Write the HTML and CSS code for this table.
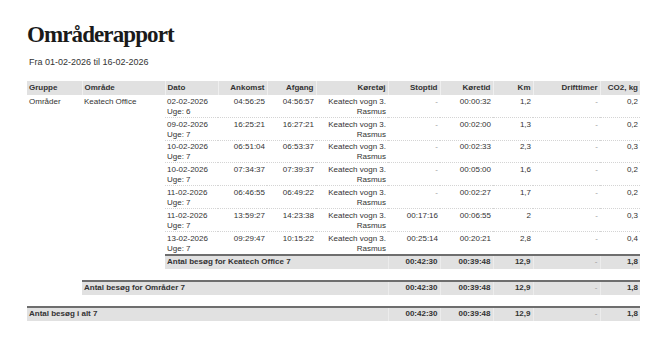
FILE: index.html
```html
<!DOCTYPE html>
<html lang="da">
<head>
<meta charset="utf-8">
<title>Områderapport</title>
<link rel="stylesheet" href="styles.css">
</head>
<body>
<main class="report">
  <h1 class="title">Områderapport</h1>
  <p class="period">Fra 01-02-2026 til 16-02-2026</p>
  <table class="grid">
    <colgroup>
      <col class="c-gruppe"><col class="c-omr"><col class="c-dato"><col class="c-ank"><col class="c-afg"><col class="c-koer"><col class="c-stop"><col class="c-ktid"><col class="c-km"><col class="c-drift"><col class="c-co2">
    </colgroup>
    <thead>
      <tr class="head">
        <th class="l">Gruppe</th><th class="l">Område</th><th class="l">Dato</th><th>Ankomst</th><th>Afgang</th><th>Køretøj</th><th>Stoptid</th><th>Køretid</th><th>Km</th><th>Drifttimer</th><th>CO2, kg</th>
      </tr>
    </thead>
    <tbody>
      <tr class="row">
        <td class="l plain">Områder</td><td class="l plain">Keatech Office</td>
        <td class="l">02-02-2026<br>Uge: 6</td><td>04:56:25</td><td>04:56:57</td><td>Keatech vogn 3. Rasmus</td><td class="dash">-</td><td>00:00:32</td><td>1,2</td><td class="dash">-</td><td>0,2</td>
      </tr>
      <tr class="row">
        <td class="plain"></td><td class="plain"></td>
        <td class="l">09-02-2026<br>Uge: 7</td><td>16:25:21</td><td>16:27:21</td><td>Keatech vogn 3. Rasmus</td><td class="dash">-</td><td>00:02:00</td><td>1,3</td><td class="dash">-</td><td>0,2</td>
      </tr>
      <tr class="row">
        <td class="plain"></td><td class="plain"></td>
        <td class="l">10-02-2026<br>Uge: 7</td><td>06:51:04</td><td>06:53:37</td><td>Keatech vogn 3. Rasmus</td><td class="dash">-</td><td>00:02:33</td><td>2,3</td><td class="dash">-</td><td>0,3</td>
      </tr>
      <tr class="row">
        <td class="plain"></td><td class="plain"></td>
        <td class="l">10-02-2026<br>Uge: 7</td><td>07:34:37</td><td>07:39:37</td><td>Keatech vogn 3. Rasmus</td><td class="dash">-</td><td>00:05:00</td><td>1,6</td><td class="dash">-</td><td>0,2</td>
      </tr>
      <tr class="row">
        <td class="plain"></td><td class="plain"></td>
        <td class="l">11-02-2026<br>Uge: 7</td><td>06:46:55</td><td>06:49:22</td><td>Keatech vogn 3. Rasmus</td><td class="dash">-</td><td>00:02:27</td><td>1,7</td><td class="dash">-</td><td>0,2</td>
      </tr>
      <tr class="row">
        <td class="plain"></td><td class="plain"></td>
        <td class="l">11-02-2026<br>Uge: 7</td><td>13:59:27</td><td>14:23:38</td><td>Keatech vogn 3. Rasmus</td><td>00:17:16</td><td>00:06:55</td><td>2</td><td class="dash">-</td><td>0,3</td>
      </tr>
      <tr class="row">
        <td class="plain"></td><td class="plain"></td>
        <td class="l">13-02-2026<br>Uge: 7</td><td>09:29:47</td><td>10:15:22</td><td>Keatech vogn 3. Rasmus</td><td>00:25:14</td><td>00:20:21</td><td>2,8</td><td class="dash">-</td><td>0,4</td>
      </tr>
      <tr class="total">
        <td class="empty"></td><td class="empty"></td>
        <td class="l label" colspan="4">Antal besøg for Keatech Office 7</td><td class="sep">00:42:30</td><td class="sep">00:39:48</td><td class="sep">12,9</td><td class="sep dash">-</td><td class="sep">1,8</td>
      </tr>
      <tr class="spacer"><td colspan="11"></td></tr>
      <tr class="total">
        <td class="empty"></td>
        <td class="l label" colspan="5">Antal besøg for Områder 7</td><td class="sep">00:42:30</td><td class="sep">00:39:48</td><td class="sep">12,9</td><td class="sep dash">-</td><td class="sep">1,8</td>
      </tr>
      <tr class="spacer"><td colspan="11"></td></tr>
      <tr class="total">
        <td class="l label" colspan="6">Antal besøg i alt 7</td><td class="sep">00:42:30</td><td class="sep">00:39:48</td><td class="sep">12,9</td><td class="sep dash">-</td><td class="sep">1,8</td>
      </tr>
    </tbody>
  </table>
</main>
</body>
</html>
```

FILE: styles.css
```css
html, body {
  margin: 0;
  padding: 0;
  background: #ffffff;
}

.report {
  padding: 21px 0 0 27px;
  font-family: "Liberation Sans", Arial, sans-serif;
  color: #333333;
}

.title {
  margin: 0;
  font-family: "Liberation Serif", "Times New Roman", serif;
  font-size: 23px;
  line-height: 28px;
  font-weight: bold;
  letter-spacing: -0.9px;
  color: #1a1a1a;
}

.period {
  margin: 7px 0 0 2px;
  font-size: 9px;
  line-height: 12px;
  color: #333333;
}

.grid {
  margin-top: 13px;
  width: 613px;
  table-layout: fixed;
  border-collapse: collapse;
  font-size: 8px;
  line-height: 10px;
}

.c-gruppe { width: 55px; }
.c-omr { width: 83px; }
.c-dato { width: 53px; }
.c-ank { width: 49px; }
.c-afg { width: 49px; }
.c-koer { width: 72px; }
.c-stop { width: 52px; }
.c-ktid { width: 53px; }
.c-km { width: 40px; }
.c-drift { width: 67px; }
.c-co2 { width: 40px; }

.grid th,
.grid td {
  padding: 0 2px;
  text-align: right;
  vertical-align: top;
  overflow: hidden;
}

.grid .l {
  text-align: left;
}

.head th {
  background: #e1e1e1;
  font-weight: bold;
  padding-top: 2px;
  padding-bottom: 2px;
  color: #333333;
  border-left: 1px solid #efefef;
}

.head th:first-child {
  border-left: none;
}

.row td {
  padding-top: 1.8px;
  padding-bottom: 0;
  border-bottom: 1px dotted #d4d4d4;
}

.row td.plain {
  border-bottom: none;
}

.dash {
  color: #9a9a9a;
}

.total td {
  background: #e1e1e1;
  border-top: 2px solid #6e6e6e;
  padding-top: 1.5px;
  padding-bottom: 1.5px;
  font-weight: bold;
}

.total td.dash {
  font-weight: normal;
}

.total td.sep {
  border-left: 1px solid #ececec;
}

.total td.empty {
  background: transparent;
  border-top: none;
}

.spacer td {
  height: 11px;
  padding: 0;
}
```
